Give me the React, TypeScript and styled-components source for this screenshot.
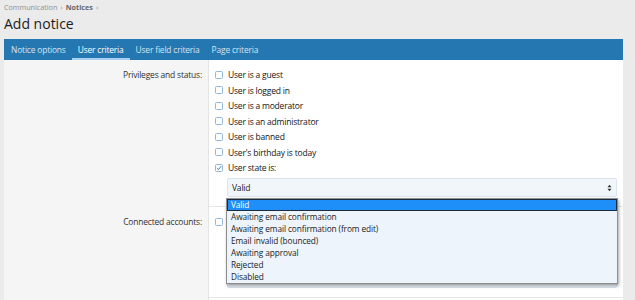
import { createGlobalStyle } from "styled-components";
import styled from "styled-components";

const GlobalStyle = createGlobalStyle`
  html, body {
    margin: 0;
    padding: 0;
    background: #ebebeb;
  }
  body {
    font-family: "Open Sans", "Noto Sans", sans-serif;
    color: #222;
  }
`;

const states = [
  "Valid",
  "Awaiting email confirmation",
  "Awaiting email confirmation (from edit)",
  "Email invalid (bounced)",
  "Awaiting approval",
  "Rejected",
  "Disabled",
];

const privileges = [
  { label: "User is a guest" },
  { label: "User is logged in" },
  { label: "User is a moderator" },
  { label: "User is an administrator" },
  { label: "User is banned" },
  { label: "User's birthday is today" },
  { label: "User state is:", checked: true },
];

const App: React.FC = () => {
  return (
    <>
      <GlobalStyle />
      <Page>
        <Breadcrumb>
          <span>Communication</span>
          <Sep>›</Sep>
          <strong>Notices</strong>
          <Sep>›</Sep>
        </Breadcrumb>
        <Title>Add notice</Title>

        <Block>
          <TabBar>
            <Tab>Notice options</Tab>
            <Tab active>User criteria</Tab>
            <Tab>User field criteria</Tab>
            <Tab>Page criteria</Tab>
          </TabBar>

          <Row>
            <Label>Privileges and status:</Label>
            <Content>
              {privileges.map((p) => (
                <CheckRow key={p.label}>
                  <Box>
                    {p.checked && (
                      <svg width="6" height="6" viewBox="0 0 6 6">
                        <path d="M0.8 3.1 L2.4 4.6 L5.2 1.2" fill="none" stroke="#3a7db8" strokeWidth="1" />
                      </svg>
                    )}
                  </Box>
                  {p.label}
                </CheckRow>
              ))}
              <SelectWrap>
                <Select>
                  <span>Valid</span>
                  <svg width="5" height="8" viewBox="0 0 5 8">
                    <path d="M0.5 3.2 L2.5 0.8 L4.5 3.2 Z M0.5 4.8 L2.5 7.2 L4.5 4.8 Z" fill="#333" />
                  </svg>
                </Select>
                <Menu>
                  {states.map((s, i) => (
                    <Option key={s} selected={i === 0}>
                      {s}
                    </Option>
                  ))}
                </Menu>
              </SelectWrap>
            </Content>
          </Row>

          <Row>
            <Label>Connected accounts:</Label>
            <Content>
              <CheckRow>
                <Box />
              </CheckRow>
              <ListBox />
            </Content>
          </Row>

          <Row>
            <Label />
            <Content />
          </Row>
        </Block>
      </Page>
    </>
  );
};

export default App;

const Page = styled.div`
  padding: 0 12px 0 4px;
`;

const Breadcrumb = styled.div`
  display: flex;
  align-items: center;
  gap: 3px;
  height: 13px;
  font-size: 7.2px;
  color: #8f8f8f;

  strong {
    color: #666;
    font-weight: 700;
  }
`;

const Sep = styled.span`
  font-size: 8px;
  color: #9a9a9a;
`;

const Title = styled.h1`
  margin: 0;
  height: 26px;
  line-height: 22px;
  font-size: 14px;
  font-weight: 400;
  color: #1c1c1c;
`;

const Block = styled.div`
  background: #fff;
`;

const TabBar = styled.div`
  display: flex;
  height: 21px;
  padding-left: 1px;
  background: #2577b1;
`;

const Tab = styled.div<{ active?: boolean }>`
  display: flex;
  align-items: center;
  padding: 0 6px;
  font-size: 8.4px;
  letter-spacing: -0.15px;
  color: ${(p) => (p.active ? "#ffffff" : "#d4e6f4")};
  box-shadow: ${(p) => (p.active ? "inset 0 -2px 0 #a9d0ee" : "none")};
`;

const Row = styled.div`
  display: grid;
  grid-template-columns: 205px 1fr;
  min-height: 30px;
`;

const Label = styled.div`
  background: #f5f5f5;
  border-right: 1px solid #e4e4e4;
  padding: 7px 6px 0 0;
  text-align: right;
  font-size: 8.5px;
  letter-spacing: -0.2px;
  line-height: 15.5px;
  color: #333;
`;

const Content = styled.div`
  padding: 7px 6px 9px 6px;
  border-bottom: 1px solid #e6e6e6;
`;

const CheckRow = styled.div`
  display: flex;
  align-items: center;
  height: 15.5px;
  font-size: 8.5px;
  letter-spacing: -0.2px;
  color: #151515;
`;

const Box = styled.span`
  display: inline-flex;
  align-items: center;
  justify-content: center;
  box-sizing: border-box;
  width: 8px;
  height: 8px;
  margin-right: 5px;
  border: 1px solid #93b6d6;
  border-radius: 1.5px;
  background: #fff;
`;

const ListBox = styled.div`
  box-sizing: border-box;
  height: 56px;
  margin: 2px 0 0 12px;
  background: #f1f6fb;
  border: 1px solid #dbe4ee;
  border-radius: 2px;
`;

const SelectWrap = styled.div`
  position: relative;
  margin: 2.5px 0 0 12px;
`;

const Select = styled.div`
  display: flex;
  align-items: center;
  justify-content: space-between;
  box-sizing: border-box;
  height: 19px;
  padding: 0 4px;
  background: #f1f6fb;
  border: 1px solid #dbe4ee;
  border-radius: 2px;
  font-size: 8.5px;
  letter-spacing: -0.2px;
  color: #1a1a1a;
`;

const Menu = styled.div`
  position: absolute;
  top: 20px;
  left: -1px;
  right: -1px;
  box-sizing: border-box;
  height: 86px;
  background: #edf4fc;
  border: 1px solid #8d8d8d;
  box-shadow: 1px 2px 3px rgba(0, 0, 0, 0.35);
  z-index: 5;
`;

const Option = styled.div<{ selected?: boolean }>`
  box-sizing: border-box;
  height: 12px;
  line-height: ${(p) => (p.selected ? "10px" : "12px")};
  padding-left: ${(p) => (p.selected ? "3px" : "4px")};
  font-size: 8.3px;
  letter-spacing: -0.1px;
  color: ${(p) => (p.selected ? "#ffffff" : "#222")};
  background: ${(p) => (p.selected ? "#1e8ff8" : "transparent")};
  border: ${(p) => (p.selected ? "1px solid #1b2c40" : "none")};
`;
